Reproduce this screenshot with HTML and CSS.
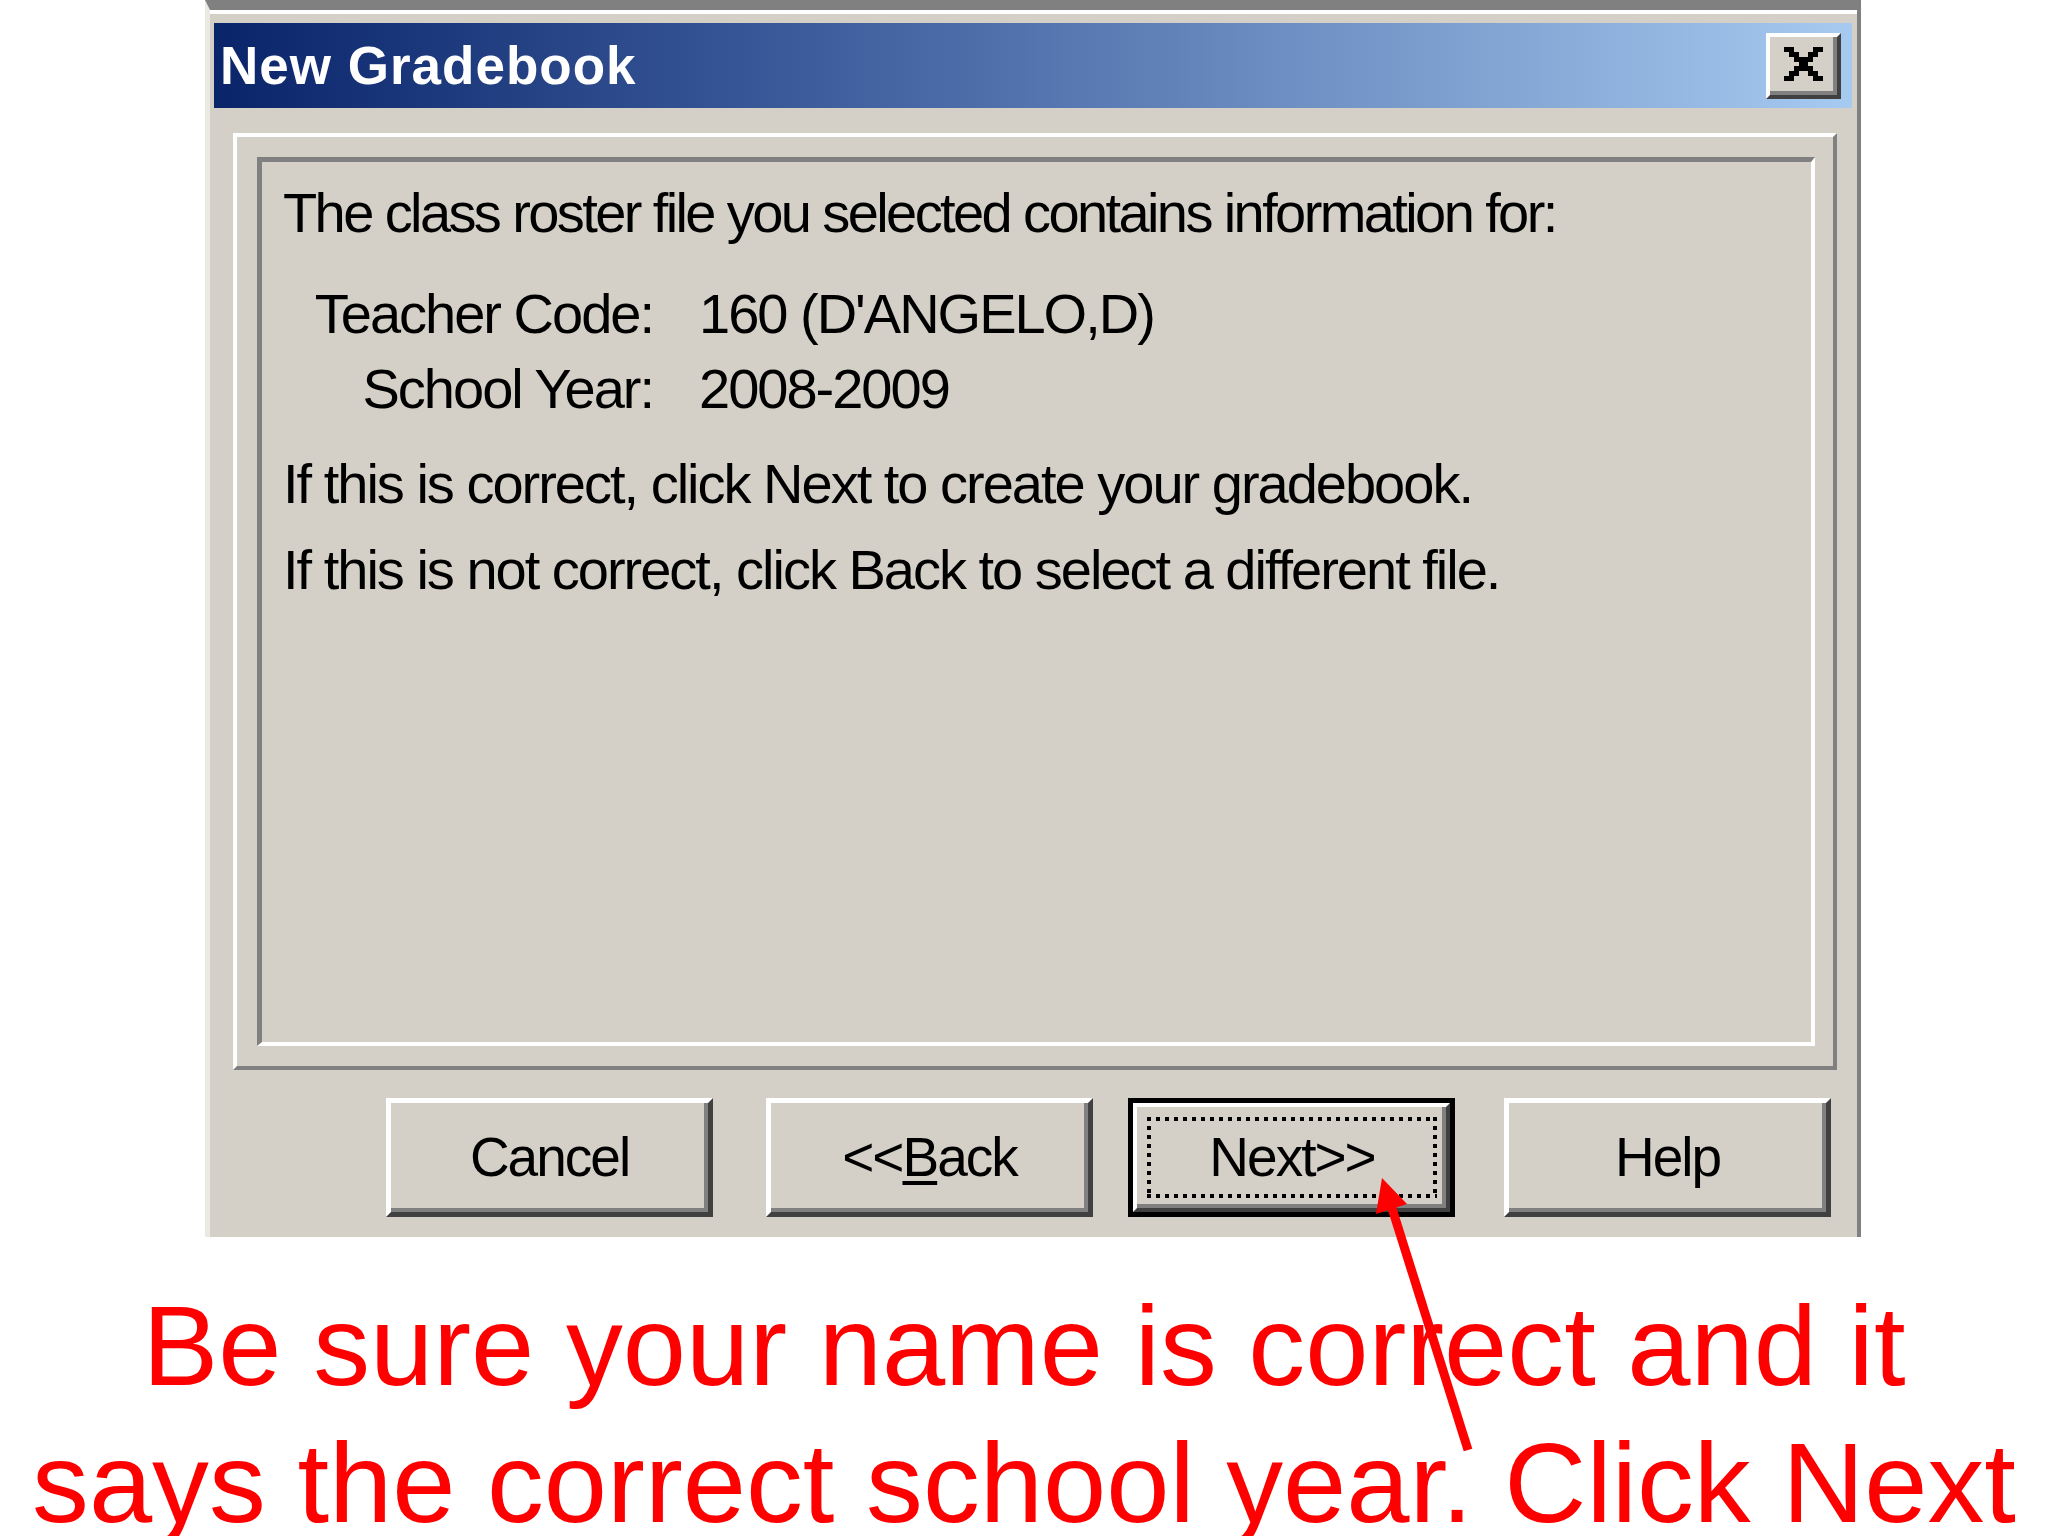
FILE: index.html
```html
<!DOCTYPE html>
<html lang="en">
<head>
<meta charset="utf-8">
<title>New Gradebook</title>
<link rel="stylesheet" href="styles.css">
</head>
<body>
<div class="page">
  <div class="window">
    <div class="frame">
      <div class="titlebar">
        <span class="title">New Gradebook</span>
        <div class="close">
          <svg class="close-glyph" viewBox="0 0 8 7" width="39" height="34" shape-rendering="crispEdges">
            <rect x="0" y="0" width="2" height="1"/><rect x="6" y="0" width="2" height="1"/>
            <rect x="1" y="1" width="2" height="1"/><rect x="5" y="1" width="2" height="1"/>
            <rect x="2" y="2" width="4" height="1"/>
            <rect x="3" y="3" width="2" height="1"/>
            <rect x="2" y="4" width="4" height="1"/>
            <rect x="1" y="5" width="2" height="1"/><rect x="5" y="5" width="2" height="1"/>
            <rect x="0" y="6" width="2" height="1"/><rect x="6" y="6" width="2" height="1"/>
          </svg>
        </div>
      </div>
      <div class="group">
        <div class="panel">
          <p class="line intro">The class roster file you selected contains information for:</p>
          <div class="fields">
            <span class="label">Teacher Code:</span><span class="value">160 (D'ANGELO,D)</span>
            <span class="label">School Year:</span><span class="value">2008-2009</span>
          </div>
          <p class="line l-next">If this is correct, click Next to create your gradebook.</p>
          <p class="line l-back">If this is not correct, click Back to select a different file.</p>
        </div>
      </div>
      <div class="buttons">
        <div class="btn btn-cancel"><span class="btn-label">Cancel</span></div>
        <div class="btn btn-back"><span class="btn-label">&lt;&lt;<u class="accel">B</u>ack</span></div>
        <div class="btn-default btn-next">
          <div class="bevel">
            <div class="focus"><span class="btn-label">Next&gt;&gt;</span></div>
          </div>
        </div>
        <div class="btn btn-help"><span class="btn-label">Help</span></div>
      </div>
    </div>
  </div>
  <div class="note">
    <div class="note-line">Be sure your name is correct and it</div>
    <div class="note-line">says the correct school year. Click Next</div>
  </div>
  <svg class="arrow" width="2048" height="1536" viewBox="0 0 2048 1536">
    <line x1="1391" y1="1205" x2="1468" y2="1450" stroke="#ff0000" stroke-width="9"/>
    <polygon points="1382,1178 1376,1214 1407,1204" fill="#ff0000"/>
  </svg>
</div>
</body>
</html>
```

FILE: styles.css
```css
html, body {
  margin: 0;
  padding: 0;
  background: #ffffff;
  overflow: hidden;
}

body {
  width: 2048px;
  height: 1536px;
  font-family: "Liberation Sans", Arial, sans-serif;
}

.page {
  position: relative;
  width: 2048px;
  height: 1536px;
}

/* ---------- dialog window ---------- */
.window {
  margin-left: 205px;
  width: 1656px;
  height: 1237px;
  box-sizing: border-box;
  border-top: 10px solid #808080;
  border-left: 5px solid #ebe9e4;
  border-right: 4px solid #808080;
  background: #d4d0c8;
}

.frame {
  border-top: 4px solid #ffffff;
  padding-top: 9px;
}

.titlebar {
  height: 85px;
  margin: 0 5px 0 4px;
  display: flex;
  background: linear-gradient(90deg, #0a246a 0%, #3a5a9a 35%, #a6caf0 100%);
}

.title {
  padding-left: 6px;
  line-height: 85px;
  font-size: 53px;
  font-weight: bold;
  letter-spacing: 1px;
  color: #ffffff;
  white-space: nowrap;
}

.close {
  margin-left: auto;
  margin-right: 11px;
  margin-top: 10px;
  width: 75px;
  height: 66px;
  box-sizing: border-box;
  border: 4px solid;
  border-color: #ffffff #404040 #404040 #ffffff;
  box-shadow: inset -4px -4px 0 #808080;
  background: #d4d0c8;
  display: flex;
  align-items: center;
  justify-content: center;
  padding-bottom: 4px;
}

.close-glyph {
  display: block;
  fill: #000000;
}

/* ---------- group + panel ---------- */
.group {
  margin: 25px 20px 0 23px;
  height: 937px;
  box-sizing: border-box;
  border: 4px solid;
  border-color: #ffffff #808080 #808080 #ffffff;
  padding: 20px 18px 20px 20px;
}

.panel {
  height: 889px;
  box-sizing: border-box;
  border-style: solid;
  border-width: 5px 4px 4px 5px;
  border-color: #808080 #ffffff #ffffff #808080;
  padding: 23px 0 0 21px;
  font-size: 56px;
  letter-spacing: -2px;
  color: #000000;
}

.line {
  margin: 0;
  line-height: 55px;
  white-space: nowrap;
}

.intro {
  margin-bottom: 46px;
  letter-spacing: -2.6px;
}

.fields {
  display: grid;
  grid-template-columns: 370px auto;
  column-gap: 46px;
  row-gap: 20px;
  line-height: 55px;
  white-space: nowrap;
}

.label {
  text-align: right;
}

.l-next {
  margin-top: 40px;
}

.l-back {
  margin-top: 31px;
}

/* ---------- buttons ---------- */
.buttons {
  display: flex;
  margin-top: 28px;
  padding-left: 176px;
}

.btn,
.btn-default {
  width: 327px;
  height: 119px;
  box-sizing: border-box;
  background: #d4d0c8;
  font-size: 55px;
  letter-spacing: -2px;
  color: #000000;
  white-space: nowrap;
}

.btn {
  border: 5px solid;
  border-color: #ffffff #404040 #404040 #ffffff;
  box-shadow: inset -4px -4px 0 #808080;
  display: flex;
  align-items: center;
  justify-content: center;
}

.btn-back {
  margin-left: 53px;
}

.btn-next {
  margin-left: 35px;
}

.btn-help {
  margin-left: 49px;
}

.btn-default {
  border: 5px solid #000000;
  display: flex;
}

.bevel {
  flex: 1;
  display: flex;
  border: 4px solid;
  border-color: #ffffff #404040 #404040 #ffffff;
  box-shadow: inset -4px -4px 0 #808080;
  padding: 10px 9px 10px 10px;
}

.focus {
  flex: 1;
  display: flex;
  align-items: center;
  justify-content: center;
  background:
    repeating-linear-gradient(90deg, #000 0 4px, transparent 4px 9px) left top / 100% 4px no-repeat,
    repeating-linear-gradient(90deg, #000 0 4px, transparent 4px 9px) left bottom / 100% 4px no-repeat,
    repeating-linear-gradient(180deg, #000 0 4px, transparent 4px 9px) left top / 4px 100% no-repeat,
    repeating-linear-gradient(180deg, #000 0 4px, transparent 4px 9px) right top / 4px 100% no-repeat;
}

.btn-label {
  line-height: 55px;
}

.accel {
  text-decoration: underline;
  text-decoration-thickness: 4px;
  text-underline-offset: 5px;
}

/* ---------- annotation ---------- */
.note {
  margin-top: 40px;
  text-align: center;
  color: #ff0000;
  font-size: 113.7px;
  line-height: 137px;
  white-space: nowrap;
}

.arrow {
  position: absolute;
  left: 0;
  top: 0;
  pointer-events: none;
}
```
